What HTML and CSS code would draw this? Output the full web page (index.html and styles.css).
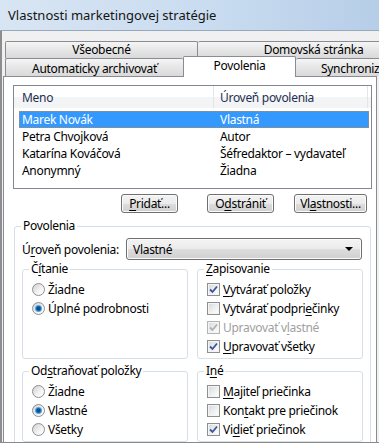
FILE: index.html
```html
<!DOCTYPE html>
<html lang="sk">
<head>
  <meta charset="UTF-8">
  <title>Vlastnosti marketingovej stratégie</title>
  <link rel="stylesheet" href="styles.css">
</head>

<body>
  <div class="window">
    <div class="titlebar">Vlastnosti marketingovej stratégie</div>

    <div class="client">
      <div class="tabs">
        <div class="tab-row">
          <div class="tab tab-general">Všeobecné</div>
          <div class="tab tab-home">Domovská stránka</div>
        </div>
        <div class="tab-row">
          <div class="tab tab-archive">Automaticky archivovať</div>
          <div class="tab tab-selected">Povolenia</div>
          <div class="tab tab-sync">Synchronizácia</div>
        </div>
      </div>

      <div class="page">
        <div class="listbox">
          <div class="list-header">
            <div class="head head-name">Meno</div>
            <div class="head head-level">Úroveň povolenia</div>
          </div>
          <div class="list-body">
            <div class="list-row selected"><span class="cell-name">Marek Novák</span><span>Vlastná</span></div>
            <div class="list-row"><span class="cell-name">Petra Chvojková</span><span>Autor</span></div>
            <div class="list-row"><span class="cell-name">Katarína Kováčová</span><span>Šéfredaktor – vydavateľ</span></div>
            <div class="list-row"><span class="cell-name">Anonymný</span><span>Žiadna</span></div>
          </div>
        </div>

        <div class="button-row">
          <button class="btn btn-add"><u>P</u>ridať...</button>
          <button class="btn btn-remove">O<u>d</u>strániť</button>
          <button class="btn btn-props">Vl<u>a</u>stnosti...</button>
        </div>

        <fieldset class="group group-main">
          <legend>Povolenia</legend>

          <div class="level-row">
            <span class="level-label">Ú<u>r</u>oveň povolenia:</span>
            <div class="select">Vlastné<span class="arrow"></span></div>
          </div>

          <div class="group-grid">
            <fieldset class="group">
              <legend>Č<u>í</u>tanie</legend>
              <div class="option"><span class="radio"></span>Žiadne</div>
              <div class="option"><span class="radio checked"></span>Úplné podrobnosti</div>
            </fieldset>

            <fieldset class="group">
              <legend><u>Z</u>apisovanie</legend>
              <div class="option">
                <span class="check"><svg viewBox="0 0 11 11"><path d="M2 5.5 L4.5 8 L9 2.5"/></svg></span>
                <span><u>V</u>ytvárať položky</span>
              </div>
              <div class="option"><span class="check"></span><span>Vytvárať podpri<u>e</u>činky</span></div>
              <div class="option disabled">
                <span class="check"><svg viewBox="0 0 11 11"><path d="M2 5.5 L4.5 8 L9 2.5"/></svg></span>
                <span>Upravovať v<u>l</u>astné</span>
              </div>
              <div class="option">
                <span class="check"><svg viewBox="0 0 11 11"><path d="M2 5.5 L4.5 8 L9 2.5"/></svg></span>
                <span><u>U</u>pravovať všetky</span>
              </div>
            </fieldset>

            <fieldset class="group">
              <legend>Od<u>s</u>traňovať položky</legend>
              <div class="option"><span class="radio"></span>Žiadne</div>
              <div class="option"><span class="radio checked"></span>Vlastné</div>
              <div class="option"><span class="radio"></span>Všetky</div>
            </fieldset>

            <fieldset class="group">
              <legend>I<u>n</u>é</legend>
              <div class="option"><span class="check"></span><span><u>M</u>ajiteľ priečinka</span></div>
              <div class="option"><span class="check"></span><span>Kon<u>t</u>akt pre priečinok</span></div>
              <div class="option">
                <span class="check"><svg viewBox="0 0 11 11"><path d="M2 5.5 L4.5 8 L9 2.5"/></svg></span>
                <span>Vi<u>d</u>ieť priečinok</span>
              </div>
            </fieldset>
          </div>
        </fieldset>
      </div>
    </div>
  </div>
</body>
</html>
```

FILE: styles.css
```css
body
{
  margin: 0;
  font-family: "Segoe UI", "Noto Sans", sans-serif;
  font-size: 12px;
  letter-spacing: -0.3px;
  color: #000;
  background-color: #f0f0f0;
}
u
{
  text-decoration-thickness: 1px;
  text-underline-offset: 2px;
}
.window
{
  width: 379px;
  height: 442px;
  overflow: hidden;
  border-bottom: 1px solid #8a8a8a;
  background-color: #f0f0f0;
}
.titlebar
{
  height: 30px;
  line-height: 30px;
  padding-left: 8px;
  font-size: 13px;
  letter-spacing: 0;
  color: #151515;
  border-bottom: 1px solid #97a8bd;
  background: linear-gradient(to right, #d8e5f3, #c9dcf0 55%, #b7cee8);
}
.client
{
  height: 411px;
  padding-top: 10px;
  border-left: 2px solid #8d8d8d;
}

/* tabs */
.tabs
{
  padding-left: 3px;
}
.tab-row
{
  display: flex;
}
.tab
{
  box-sizing: border-box;
  flex: none;
  height: 17px;
  line-height: 16px;
  text-align: center;
  white-space: nowrap;
  border: 1px solid #898c95;
  border-bottom: none;
  border-radius: 2px 2px 0 0;
  background: linear-gradient(#f5f5f5, #e6e6e6 50%, #d9d9d9);
}
.tab-general
{
  width: 193px;
}
.tab-home
{
  width: 232px;
  border-left: none;
}
.tab-archive
{
  width: 178px;
  height: 18px;
  line-height: 19px;
  border-right: none;
}
.tab-selected
{
  position: relative;
  z-index: 1;
  width: 113px;
  height: 21px;
  margin-top: -2px;
  margin-bottom: -1px;
  line-height: 17px;
  background: #fff;
}
.tab-sync
{
  width: 140px;
  height: 18px;
  line-height: 19px;
  padding-left: 25px;
  text-align: left;
  border-left: none;
}

/* tab page */
.page
{
  width: 374px;
  height: 380px;
  box-sizing: border-box;
  margin-left: 1px;
  padding: 8px 0 0 9px;
  border: 1px solid #898c95;
  background-color: #fff;
}
.listbox
{
  width: 359px;
  height: 104px;
  box-sizing: border-box;
  border: 1px solid #828790;
  background-color: #fff;
}
.list-header
{
  display: flex;
  height: 22px;
  line-height: 24px;
  color: #1e3050;
  background: linear-gradient(#fff 50%, #f3f4f6 50%);
}
.head-name
{
  width: 191px;
  padding-left: 8px;
  border-right: 1px solid #e3e5e9;
}
.head-level
{
  width: 147px;
  padding-left: 6px;
  border-right: 1px solid #e3e5e9;
}
.list-body
{
  padding: 3px 2px 0 5px;
}
.list-row
{
  display: flex;
  height: 17px;
  line-height: 15px;
  box-sizing: border-box;
  padding-left: 2px;
  border: 1px solid transparent;
}
.list-row.selected
{
  color: #fff;
  background-color: #3399ff;
  border: 1px dotted #c9863e;
}
.cell-name
{
  width: 198px;
}

/* buttons */
.button-row
{
  display: flex;
  margin-top: 5px;
  padding-left: 108px;
}
.btn
{
  height: 19px;
  padding: 0;
  font-family: inherit;
  font-size: 12px;
  letter-spacing: -0.3px;
  line-height: 16px;
  color: #000;
  border: 1px solid #707070;
  border-radius: 3px;
  box-shadow: inset 0 0 0 1px #fbfbfb;
  background: linear-gradient(#f3f3f3, #ebebeb 50%, #dddddd 50%, #d0d0d0);
}
.btn-add
{
  width: 57px;
}
.btn-remove
{
  width: 67px;
  margin-left: 29px;
}
.btn-props
{
  width: 73px;
  margin-left: 20px;
}

/* group boxes */
.group
{
  margin: 0;
  padding: 3px 0 2px 9px;
  min-width: 0;
  border: 1px solid #d5dfe5;
  border-radius: 3px;
}
.group legend
{
  height: 16px;
  line-height: 16px;
  padding: 0 2px;
  margin-left: -3px;
}
.group-main
{
  width: 357px;
  box-sizing: border-box;
  margin: 5px 0 0 1px;
  padding: 0 7px 3px 7px;
}
.group-main > legend
{
  margin-left: -1px;
}
.level-row
{
  display: flex;
  align-items: center;
  margin-top: 4px;
}
.level-label
{
  width: 104px;
}
.select
{
  display: flex;
  justify-content: space-between;
  align-items: center;
  width: 236px;
  height: 22px;
  box-sizing: border-box;
  padding: 0 8px 0 6px;
  border: 1px solid #707070;
  border-radius: 3px;
  box-shadow: inset 0 0 0 1px #fbfbfb;
  background: linear-gradient(#f3f3f3, #ebebeb 50%, #dddddd 50%, #d0d0d0);
}
.arrow
{
  width: 0;
  height: 0;
  border-left: 4px solid transparent;
  border-right: 4px solid transparent;
  border-top: 4px solid #000;
}
.group-grid
{
  display: grid;
  grid-template-columns: 166px 166px;
  column-gap: 9px;
  row-gap: 4px;
  margin-top: 1px;
}
.option
{
  display: flex;
  align-items: center;
  gap: 3px;
  height: 19px;
  white-space: nowrap;
}
.option.disabled
{
  color: #a0a0a0;
}
.radio
{
  flex: none;
  width: 13px;
  height: 13px;
  box-sizing: border-box;
  border: 1px solid #8e8f8f;
  border-radius: 50%;
  background: linear-gradient(135deg, #d0d0d0, #f4f4f4 60%, #fff);
}
.radio.checked
{
  background:
    radial-gradient(circle, #0c4f8c 0 1.5px, #2b82c9 2.5px, #8cc5f0 3.5px, transparent 4px),
    linear-gradient(135deg, #d0d0d0, #f4f4f4 60%, #fff);
}
.check
{
  flex: none;
  display: flex;
  width: 13px;
  height: 13px;
  box-sizing: border-box;
  border: 1px solid #8e8f8f;
  box-shadow: inset 0 0 0 1px #f4f4f4;
  background: linear-gradient(135deg, #d3d6da, #f0f0f0 55%, #fff);
}
.check svg
{
  width: 11px;
  height: 11px;
}
.check path
{
  fill: none;
  stroke: #3a55a0;
  stroke-width: 1.8;
}
.disabled .check
{
  border-color: #b4b4b4;
}
.disabled .check path
{
  stroke: #b0b0b0;
}
```
